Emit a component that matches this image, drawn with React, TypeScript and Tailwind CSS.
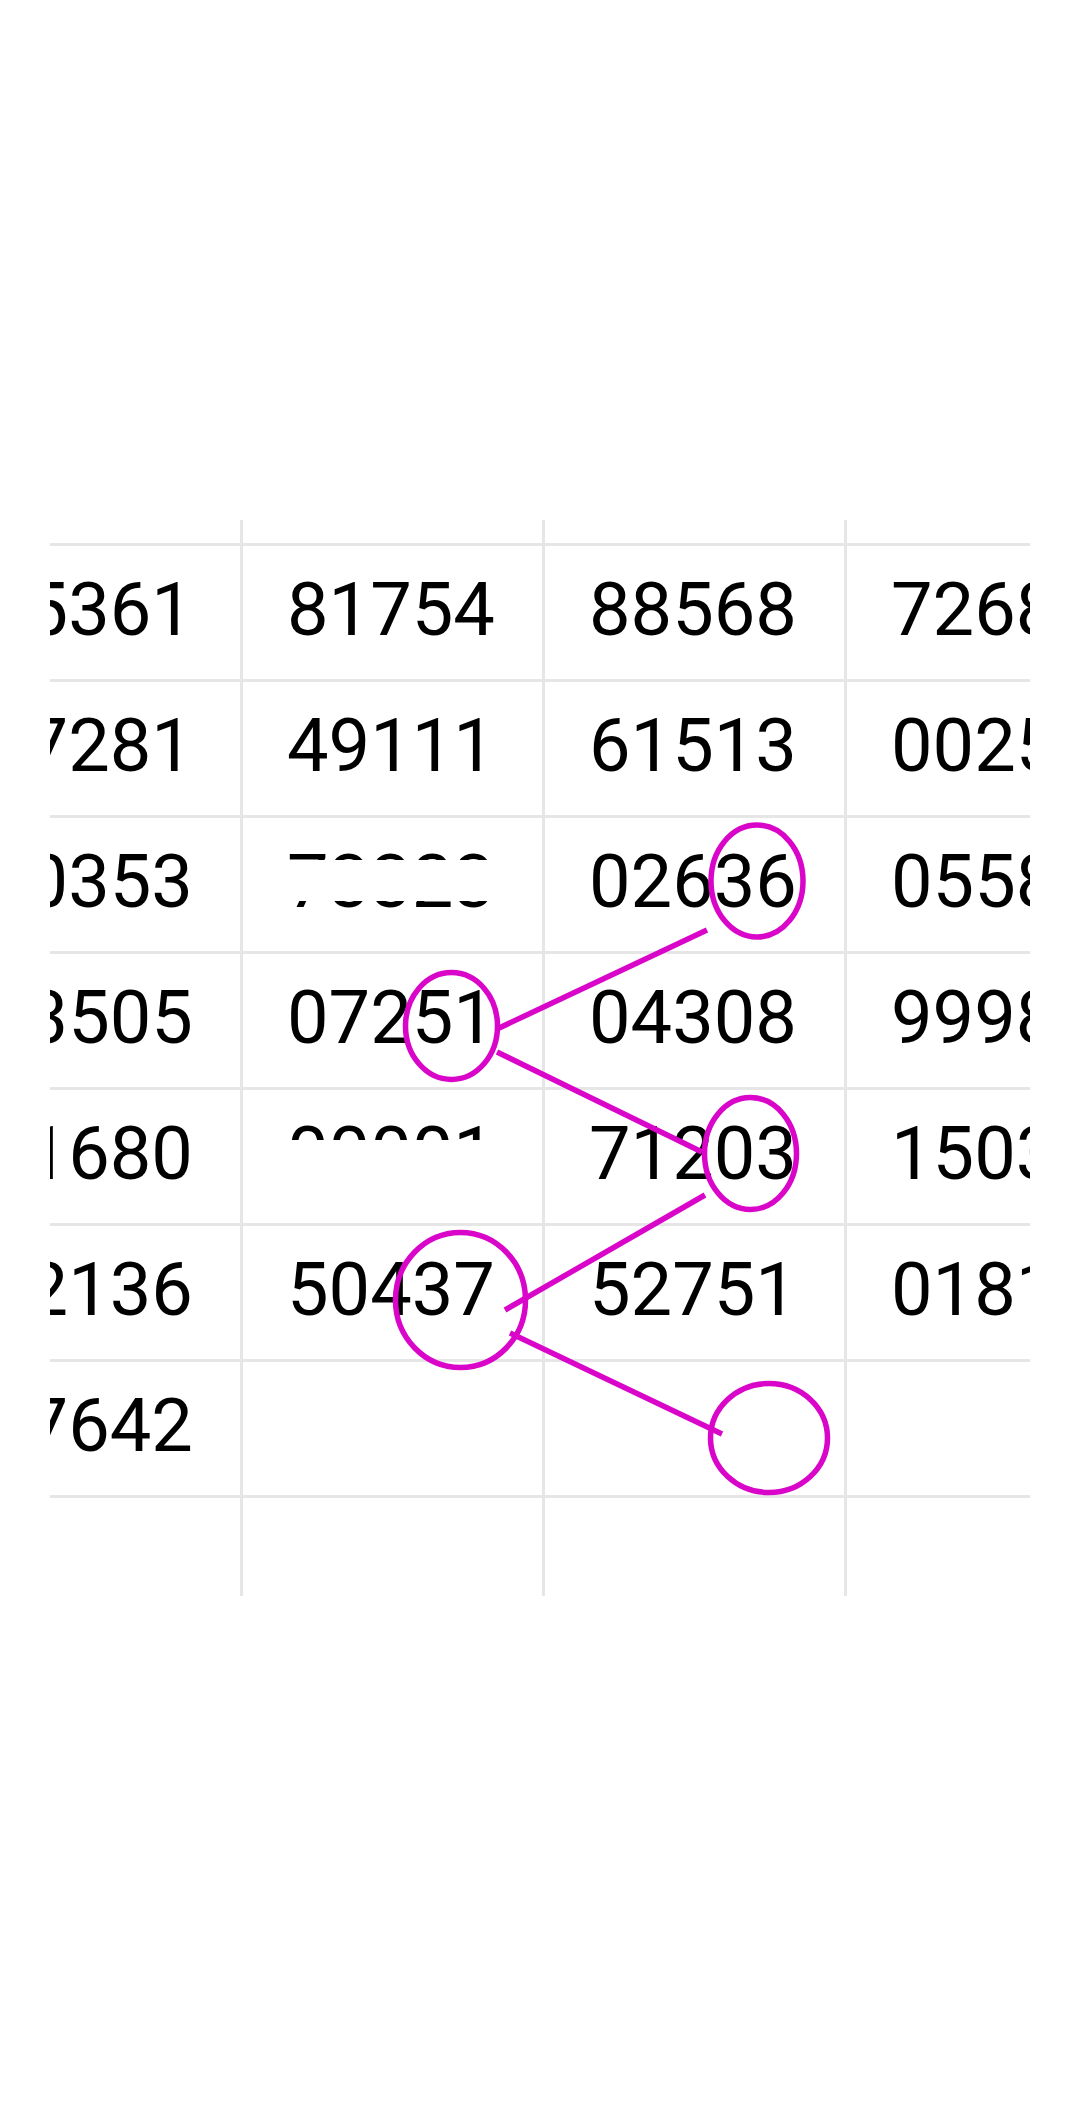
import React from "react";

type Cell = { text: string; mask?: { top: number; height: number } };

const rows: Cell[][] = [
  [{ text: "15361" }, { text: "81754" }, { text: "88568" }, { text: "72680" }],
  [{ text: "47281" }, { text: "49111" }, { text: "61513" }, { text: "00251" }],
  [{ text: "60353" }, { text: "73323", mask: { top: 42, height: 41 } }, { text: "02636" }, { text: "05583" }],
  [{ text: "83505" }, { text: "07251" }, { text: "04308" }, { text: "99987" }],
  [{ text: "21680" }, { text: "00001", mask: { top: 50, height: 50 } }, { text: "71203" }, { text: "15039" }],
  [{ text: "92136" }, { text: "50437" }, { text: "52751" }, { text: "01814" }],
  [{ text: "37642" }, { text: "" }, { text: "" }, { text: "" }],
];

function Row({ cells, partial }: { cells: Cell[]; partial?: boolean }) {
  return (
    <div
      className={
        partial
          ? "grid grid-cols-4 h-[23px]"
          : "grid grid-cols-4 h-[136px] border-t-[3px] border-[#e6e6e6]"
      }
    >
      {cells.map((c, i) => (
        <div
          key={i}
          className="relative flex items-center border-l-[3px] border-[#e6e6e6] pl-[44px] pb-[6px]"
        >
          <span className="text-[74px] leading-none text-black tracking-normal">{c.text}</span>
          {c.mask && (
            <div
              className="absolute left-[37px] w-[230px] bg-white"
              style={{ top: c.mask.top, height: c.mask.height }}
            />
          )}
        </div>
      ))}
    </div>
  );
}

const empty: Cell[] = [{ text: "" }, { text: "" }, { text: "" }, { text: "" }];

export default function App() {
  const stroke = "#d905c9";
  return (
    <div
      className="relative w-[1080px] h-[2116px] bg-white overflow-hidden"
      style={{ fontFamily: "Roboto, 'Noto Sans', sans-serif" }}
    >
      <div className="pt-[520px] pl-[50px]">
        <div className="w-[980px] h-[1076px] overflow-hidden">
          <div className="ml-[-112px] w-[1208px] flex flex-col">
            <Row cells={empty} partial />
            {rows.map((r, i) => (
              <Row key={i} cells={r} />
            ))}
            <Row cells={empty} />
          </div>
        </div>
      </div>

      <svg
        className="absolute left-0 top-0 pointer-events-none"
        width={1080}
        height={2116}
        viewBox="0 0 1080 2116"
        fill="none"
      >
        <g stroke={stroke} strokeWidth={5.5}>
          <ellipse cx={757} cy={881} rx={46} ry={56} />
          <ellipse cx={451.5} cy={1026} rx={46} ry={53.5} />
          <ellipse cx={750.5} cy={1153.5} rx={46} ry={56} />
          <ellipse cx={460.5} cy={1300} rx={65} ry={67.5} />
          <ellipse cx={769} cy={1438} rx={58.5} ry={54.5} />
          <line x1={707} y1={930} x2={497} y2={1029} />
          <line x1={497} y1={1052} x2={702} y2={1152} />
          <line x1={705} y1={1195} x2={505} y2={1310} />
          <line x1={510} y1={1333} x2={722} y2={1434} />
        </g>
      </svg>
    </div>
  );
}
